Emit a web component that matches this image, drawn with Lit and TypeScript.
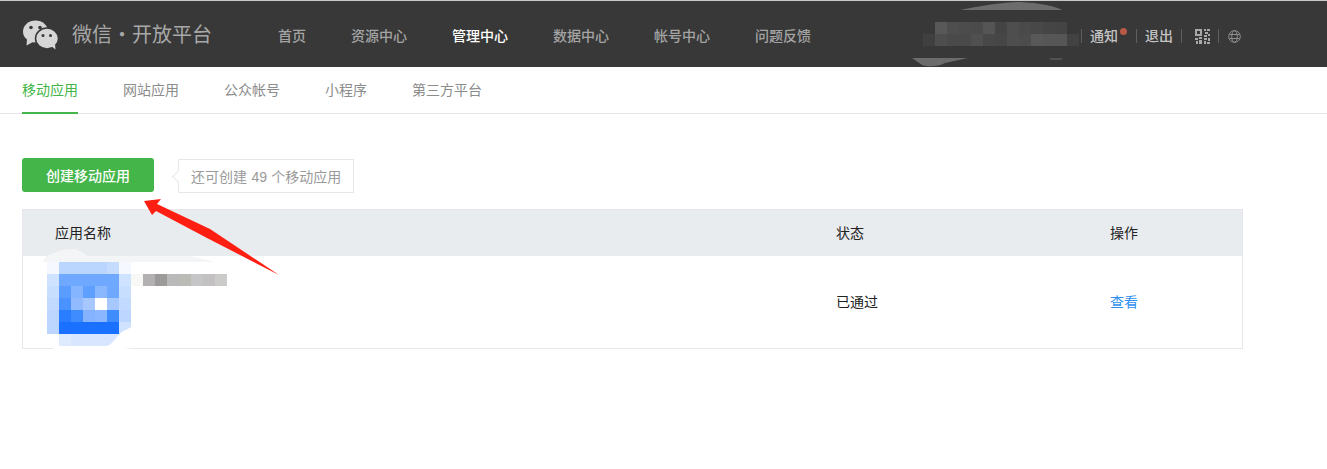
import { LitElement, html, css, svg } from "lit";
import { customElement } from "lit/decorators.js";

const ICON: (string | null)[][] = [
  ["#f5f9ff", "#bad6ff", "#bad6ff", "#bad6ff", "#bad6ff", "#c5dcff", "#f5f9ff"],
  ["#cfe2ff", "#6fa9ff", "#6fa9ff", "#6fa9ff", "#6fa9ff", "#6fa9ff", "#cfe2ff"],
  ["#c8deff", "#5a9cff", "#86b5ff", "#5e9fff", "#8ab8ff", "#6fa9ff", "#c8deff"],
  ["#c2daff", "#4a92ff", "#92bbff", "#a6c8ff", "#ffffff", "#a6c8ff", "#c2daff"],
  ["#bcd6ff", "#2a7dff", "#3f8cff", "#84b2ff", "#8ab6ff", "#3f8cff", "#bcd6ff"],
  ["#bcd6ff", "#1a70ff", "#1a70ff", "#1a70ff", "#1a70ff", "#1a70ff", "#cfe2ff"],
  [null, "#deebff", "#d8e6ff", "#d8e6ff", "#d8e6ff", "#d8e6ff", null],
];
const NAME = ["#f8f8f6", "#b3b1b1", "#9c9b99", "#b8b9b8", "#bcbcb6", "#c5c5c7", "#c3c1c1", "#cbcbca"];
const USER_TOP = ["#585858", "#4e4e4e", "#4c4c4c", "#4b4b4b", "#555555", "#444444", "#4e4e4e", "#4a4a4a", "#484848", "#454545", "#444444"];
const USER_BOTTOM = ["#404040", "#4e4e4e", "#4a4a4a", "#4a4a4a", "#505050", "#484848", "#464646", "#4e4e4e", "#4c4c4c", "#585858", "#565656", "#565656", "#424242"];

@customElement("app-root")
export class AppRoot extends LitElement {
  static styles = css`
    :host {
      display: block;
      position: relative;
      width: 1327px;
      height: 469px;
      overflow: hidden;
      background: #fff;
      font-family: "Liberation Sans", "Noto Sans CJK SC", sans-serif;
      font-size: 14px;
      color: #222;
    }
    .top {
      height: 66px;
      border-top: 1px solid #c9c9c9;
      background: #383838;
      display: flex;
      align-items: center;
      padding-left: 22px;
      box-sizing: content-box;
    }
    .logo { width: 37px; height: 31px; flex: none; }
    .brand {
      margin-left: 13px;
      width: 206px;
      flex: none;
      font-size: 20px;
      line-height: 28px;
      padding-top: 2px;
      color: #a8a8a8;
      white-space: nowrap;
    }
    .nav { display: flex; gap: 45px; padding-top: 1px; font-weight: 500; color: #a4a4a4; }
    .nav .on { color: #fff; }
    .tools {
      position: absolute;
      left: 1081px;
      top: 29px;
      height: 14px;
      display: flex;
      align-items: center;
      font-weight: 500;
      color: #c4c4c4;
    }
    .tools .item {
      position: relative;
      display: flex;
      align-items: center;
      box-sizing: border-box;
      height: 14px;
      border-left: 1px solid #5e5e5e;
      padding-left: 8px;
      padding-bottom: 2px;
    }
    .tools .w1 { width: 55px; }
    .tools .w2 { width: 45px; }
    .tools .w3 { width: 37px; padding-left: 13px; padding-bottom: 0; }
    .tools .w4 { padding-left: 9px; padding-bottom: 0; }
    .dot {
      position: absolute;
      width: 7px;
      height: 7px;
      border-radius: 50%;
      background: #b85a45;
      left: 38px;
      top: -1px;
    }
    .sub {
      height: 46px;
      border-bottom: 1px solid #e7e7eb;
      display: flex;
      padding-left: 22px;
      gap: 45px;
      color: #8c8c8c;
    }
    .sub a {
      display: flex;
      align-items: center;
      height: 47px;
      box-sizing: border-box;
      padding-bottom: 2px;
      border-bottom: 2px solid transparent;
    }
    .sub a.on { color: #44b549; border-bottom-color: #44b549; }
    .main { padding: 44px 84px 0 22px; }
    .actions { display: flex; align-items: flex-start; gap: 24px; height: 35px; }
    .btn {
      width: 132px;
      height: 34px;
      box-sizing: border-box;
      padding-bottom: 1px;
      border-radius: 3px;
      background: #44b549;
      color: #fff;
      font-weight: 500;
      display: flex;
      align-items: center;
      justify-content: center;
    }
    .tip {
      position: relative;
      box-sizing: border-box;
      width: 176px;
      height: 34px;
      margin-top: 1px;
      border: 1px solid #e7e7eb;
      color: #9a9a9a;
      display: flex;
      align-items: center;
      padding-left: 12px;
      padding-bottom: 1px;
      word-spacing: 0.5px;
      white-space: nowrap;
    }
    .tip::before {
      content: "";
      position: absolute;
      left: -5px;
      top: 12px;
      width: 8px;
      height: 8px;
      background: #fff;
      border-left: 1px solid #e7e7eb;
      border-bottom: 1px solid #e7e7eb;
      transform: rotate(45deg);
    }
    .table {
      margin-top: 16px;
      border: 1px solid #e7e7eb;
      display: grid;
      grid-template-columns: 813px 274px 1fr;
    }
    .table .h {
      height: 46px;
      background: #e9ecef;
      display: flex;
      align-items: center;
      box-sizing: border-box;
      padding-bottom: 3px;
      color: #222;
    }
    .table .h.first { padding-left: 32px; }
    .table .c {
      height: 92px;
      display: flex;
      align-items: center;
      box-sizing: border-box;
      padding-bottom: 2px;
    }
    .link { color: #2e8ff0; }
    .over { position: absolute; left: 0; top: 0; pointer-events: none; }
  `;

  private mosaic() {
    const cells = [];
    ICON.forEach((row, y) =>
      row.forEach((c, x) => {
        if (c) cells.push(svg`<rect x=${47 + x * 12} y=${262 + y * 12} width="12" height="12" fill=${c}/>`);
      })
    );
    NAME.forEach((c, x) => cells.push(svg`<rect x=${131 + x * 12} y="274" width="12" height="12" fill=${c}/>`));
    USER_TOP.forEach((c, x) => cells.push(svg`<rect x=${935 + x * 12} y="22" width="12" height="12" fill=${c}/>`));
    USER_BOTTOM.forEach((c, x) => cells.push(svg`<rect x=${923 + x * 12} y="34" width="12" height="12" fill=${c}/>`));
    return cells;
  }

  render() {
    return html`
      <div class="top">
        <svg class="logo" viewBox="0 0 37 31">
          <ellipse cx="13.500" cy="12.500" rx="12.500" ry="11" fill="#d6d6d6"/>
          <path fill="#d6d6d6" d="M5 20l-.5 6.500L11 23z"/>
          <ellipse cx="25" cy="19.500" rx="11.500" ry="10.500" fill="#d6d6d6" stroke="#383838" stroke-width="1.500"/>
          <path fill="#d6d6d6" d="M29 27l4.500 3.500L33 25z"/>
          <circle cx="9" cy="8.500" r="1.800" fill="#383838"/>
          <circle cx="18" cy="8.500" r="1.800" fill="#383838"/>
          <circle cx="21" cy="16.500" r="1.500" fill="#383838"/>
          <circle cx="28.500" cy="16.500" r="1.500" fill="#383838"/>
        </svg>
        <div class="brand">微信・开放平台</div>
        <div class="nav">
          <span>首页</span><span>资源中心</span><span class="on">管理中心</span><span>数据中心</span><span>帐号中心</span><span>问题反馈</span>
        </div>
      </div>
      <div class="tools">
        <div class="item w1">通知<i class="dot"></i></div>
        <div class="item w2">退出</div>
        <div class="item w3">
          <svg width="15" height="15" viewBox="0 0 15 15" fill="#a8a8a8">
            <path fill-rule="evenodd" d="M0 0h7v7H0zM2 2v3h3V2z"/>
            <path d="M9 0h2v2H9zM12 0h3v2h-3zM10 3h3v2h-3zM13 5h2v2h-2zM9 6h3v2H9z"/>
            <path d="M0 9h3v2H0zM4 8h3v2H4zM1 12h2v3H1zM4 11h3v4H4zM9 9h3v2H9zM13 9h2v3h-2zM9 12h2v3H9zM12 13h3v2h-3z"/>
          </svg>
        </div>
        <div class="item w4">
          <svg width="13" height="13" viewBox="0 0 13 13" fill="none" stroke="#8e8e8e" stroke-width="1">
            <circle cx="6.500" cy="6.500" r="5.800"/>
            <ellipse cx="6.500" cy="6.500" rx="2.800" ry="5.800"/>
            <path d="M1.500 4.500h10M1.500 8.500h10"/>
          </svg>
        </div>
      </div>
      <div class="sub">
        <a class="on">移动应用</a><a>网站应用</a><a>公众帐号</a><a>小程序</a><a>第三方平台</a>
      </div>
      <div class="main">
        <div class="actions">
          <div class="btn">创建移动应用</div>
          <div class="tip">还可创建 49 个移动应用</div>
        </div>
        <div class="table">
          <div class="h first">应用名称</div><div class="h">状态</div><div class="h">操作</div>
          <div class="c"></div><div class="c">已通过</div><div class="c"><a class="link">查看</a></div>
        </div>
      </div>
      <svg class="over" width="1327" height="469" viewBox="0 0 1327 469">
        <path fill="#6c6c6c" d="M960 10 C985 5 1005 2 1020 2 C1040 3 1055 6 1062 10z"/>
        <path fill="#6c6c6c" d="M912 58 H968 L945 63 C938 67 928 67 922 65z"/>
        <path fill="#6c6c6c" d="M1050 58.500 H1062 V59.500 H1050z"/>
        <path fill="#f4f5f6" d="M43 262 L46 256 L62 250 L76 249 L88 256 L190 256 L215 262z"/>
        ${this.mosaic()}
        <path fill="#fff" d="M132 327 C125 330 120 332 117 337 C113 342 110 345 106 347 L53 346 L53 350 L110 350 L135 348z"/>
        <path fill="#ff1e12" d="M144 201 L161 199 L157 204 L210 229 L279 275 L207 238 L156 211 L152 215z"/>
      </svg>
    `;
  }
}
